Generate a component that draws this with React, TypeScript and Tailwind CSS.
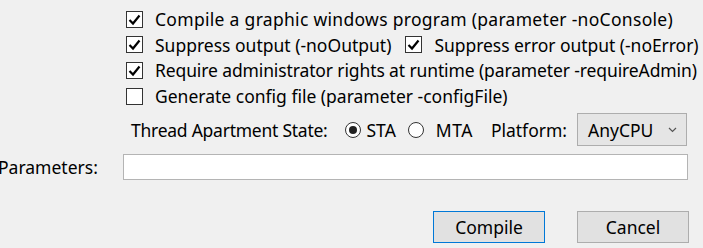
import React from "react";

function Check({ checked }: { checked: boolean }) {
  return (
    <span className="w-[17px] h-[17px] border border-[#333333] bg-white flex items-center justify-center shrink-0">
      {checked && (
        <svg width="13" height="13" viewBox="0 0 13 13">
          <path d="M1.5 7 L5 10.5 L11.5 2.5" fill="none" stroke="#000" strokeWidth="2.2" />
        </svg>
      )}
    </span>
  );
}

function Radio({ checked }: { checked: boolean }) {
  return (
    <span className="w-[16px] h-[16px] rounded-full border border-[#333333] bg-white flex items-center justify-center shrink-0">
      {checked && <span className="w-[8px] h-[8px] rounded-full bg-[#222]" />}
    </span>
  );
}

function Option({ checked, label, className }: { checked: boolean; label: string; className?: string }) {
  return (
    <div className="flex items-center gap-[12px] whitespace-nowrap">
      <Check checked={checked} />
      <span className={className}>{label}</span>
    </div>
  );
}

export default function App() {
  return (
    <div className="w-[703px] h-[248px] bg-[#f0f0f0] overflow-hidden font-['Noto_Sans',sans-serif] text-[17.5px] leading-[18px] text-black">
      <div className="pl-[126px] pt-[10px] flex flex-col gap-[7.7px]">
        <Option checked className="tracking-[0.3px]" label="Compile a graphic windows program (parameter -noConsole)" />
        <div className="flex items-center gap-[14px] whitespace-nowrap">
          <Option checked label="Suppress output (-noOutput)" />
          <Option checked className="tracking-[-0.05px]" label="Suppress error output (-noError)" />
        </div>
        <Option checked className="tracking-[-0.12px]" label="Require administrator rights at runtime (parameter -requireAdmin)" />
        <Option checked={false} label="Generate config file (parameter -configFile)" />
      </div>

      <div className="flex items-center pl-[131px] mt-[8px] h-[33px] whitespace-nowrap">
        <span className="tracking-[-0.25px]">Thread Apartment State:</span>
        <div className="flex items-center gap-[6px] ml-[17px]">
          <Radio checked />
          <span>STA</span>
        </div>
        <div className="flex items-center gap-[12px] ml-[12px]">
          <Radio checked={false} />
          <span className="tracking-[0.5px]">MTA</span>
        </div>
        <span className="ml-[18px]">Platform:</span>
        <div className="ml-[10px] w-[110px] h-[33px] border border-[#adadad] bg-[#e5e5e5] flex items-center justify-between pl-[10px] pr-[9px]">
          <span>AnyCPU</span>
          <svg width="9" height="6" viewBox="0 0 9 6">
            <path d="M1 1 L4.5 4.5 L8 1" fill="none" stroke="#555" strokeWidth="1.2" />
          </svg>
        </div>
      </div>

      <div className="flex items-center mt-[8px] h-[26px]">
        <span className="w-[125px] shrink-0 -ml-[2px] whitespace-nowrap">Parameters:</span>
        <div className="w-[565px] h-[26px] border border-[#b4b4b4] bg-white" />
      </div>

      <div className="flex justify-end gap-[32px] pr-[14px] mt-[31px]">
        <button className="w-[112px] h-[32px] border border-[#0078d7] bg-[#e1e1e1]">Compile</button>
        <button className="w-[112px] h-[32px] border border-[#adadad] bg-[#e1e1e1]">Cancel</button>
      </div>
    </div>
  );
}
